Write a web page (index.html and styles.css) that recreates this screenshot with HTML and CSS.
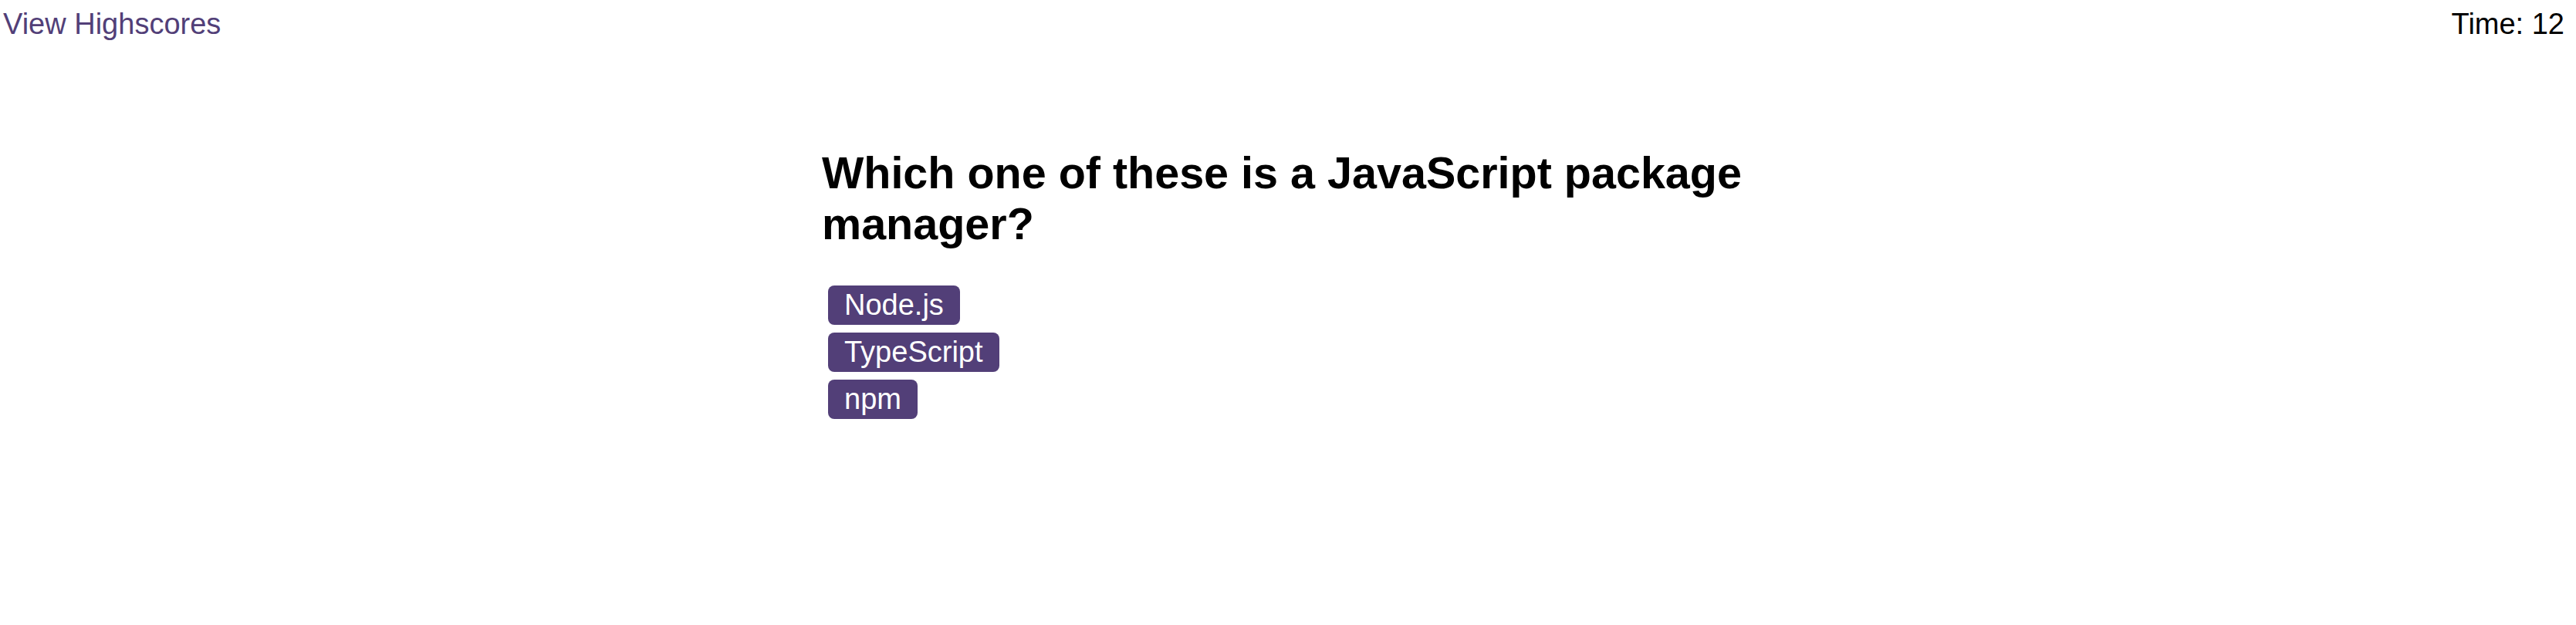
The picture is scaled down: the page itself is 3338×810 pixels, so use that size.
FILE: index.html
```html
<!DOCTYPE html>
<html lang="en">
<head>
<meta charset="utf-8">
<title>Quiz</title>
<link rel="stylesheet" href="styles.css">
</head>
<body>
<header class="topbar">
  <a class="highscores-link" href="#">View Highscores</a>
  <div class="timer">Time: 12</div>
</header>
<main class="quiz">
  <h2 class="question">Which one of these is a JavaScript package manager?</h2>
  <div class="answers">
    <button class="answer">Node.js</button>
    <button class="answer">TypeScript</button>
    <button class="answer">npm</button>
  </div>
</main>
</body>
</html>
```
FILE: styles.css
```css
html, body {
  margin: 0;
  padding: 0;
  background: #ffffff;
}

body {
  font-family: "Liberation Sans", Arial, sans-serif;
  font-size: 38px;
  color: #000000;
}

.topbar {
  display: flex;
  justify-content: space-between;
  align-items: flex-start;
  padding: 10px 15px 0 4px;
}

.highscores-link {
  color: #523f78;
  text-decoration: none;
}

.timer {
  color: #000000;
}

.quiz {
  width: 1210px;
  margin: 138px auto 0;
  padding-left: 2px;
}

.question {
  margin: 0;
  font-size: 57.5px;
  font-weight: bold;
  line-height: normal;
}

.answers {
  display: flex;
  flex-direction: column;
  align-items: flex-start;
  gap: 10px;
  margin-top: 47px;
  padding-left: 8px;
}

.answer {
  font-family: "Liberation Sans", Arial, sans-serif;
  font-size: 38px;
  line-height: normal;
  color: #ffffff;
  background: #523f78;
  border: none;
  border-radius: 8px;
  padding: 4px 21px;
  margin: 0;
  cursor: pointer;
}
```
